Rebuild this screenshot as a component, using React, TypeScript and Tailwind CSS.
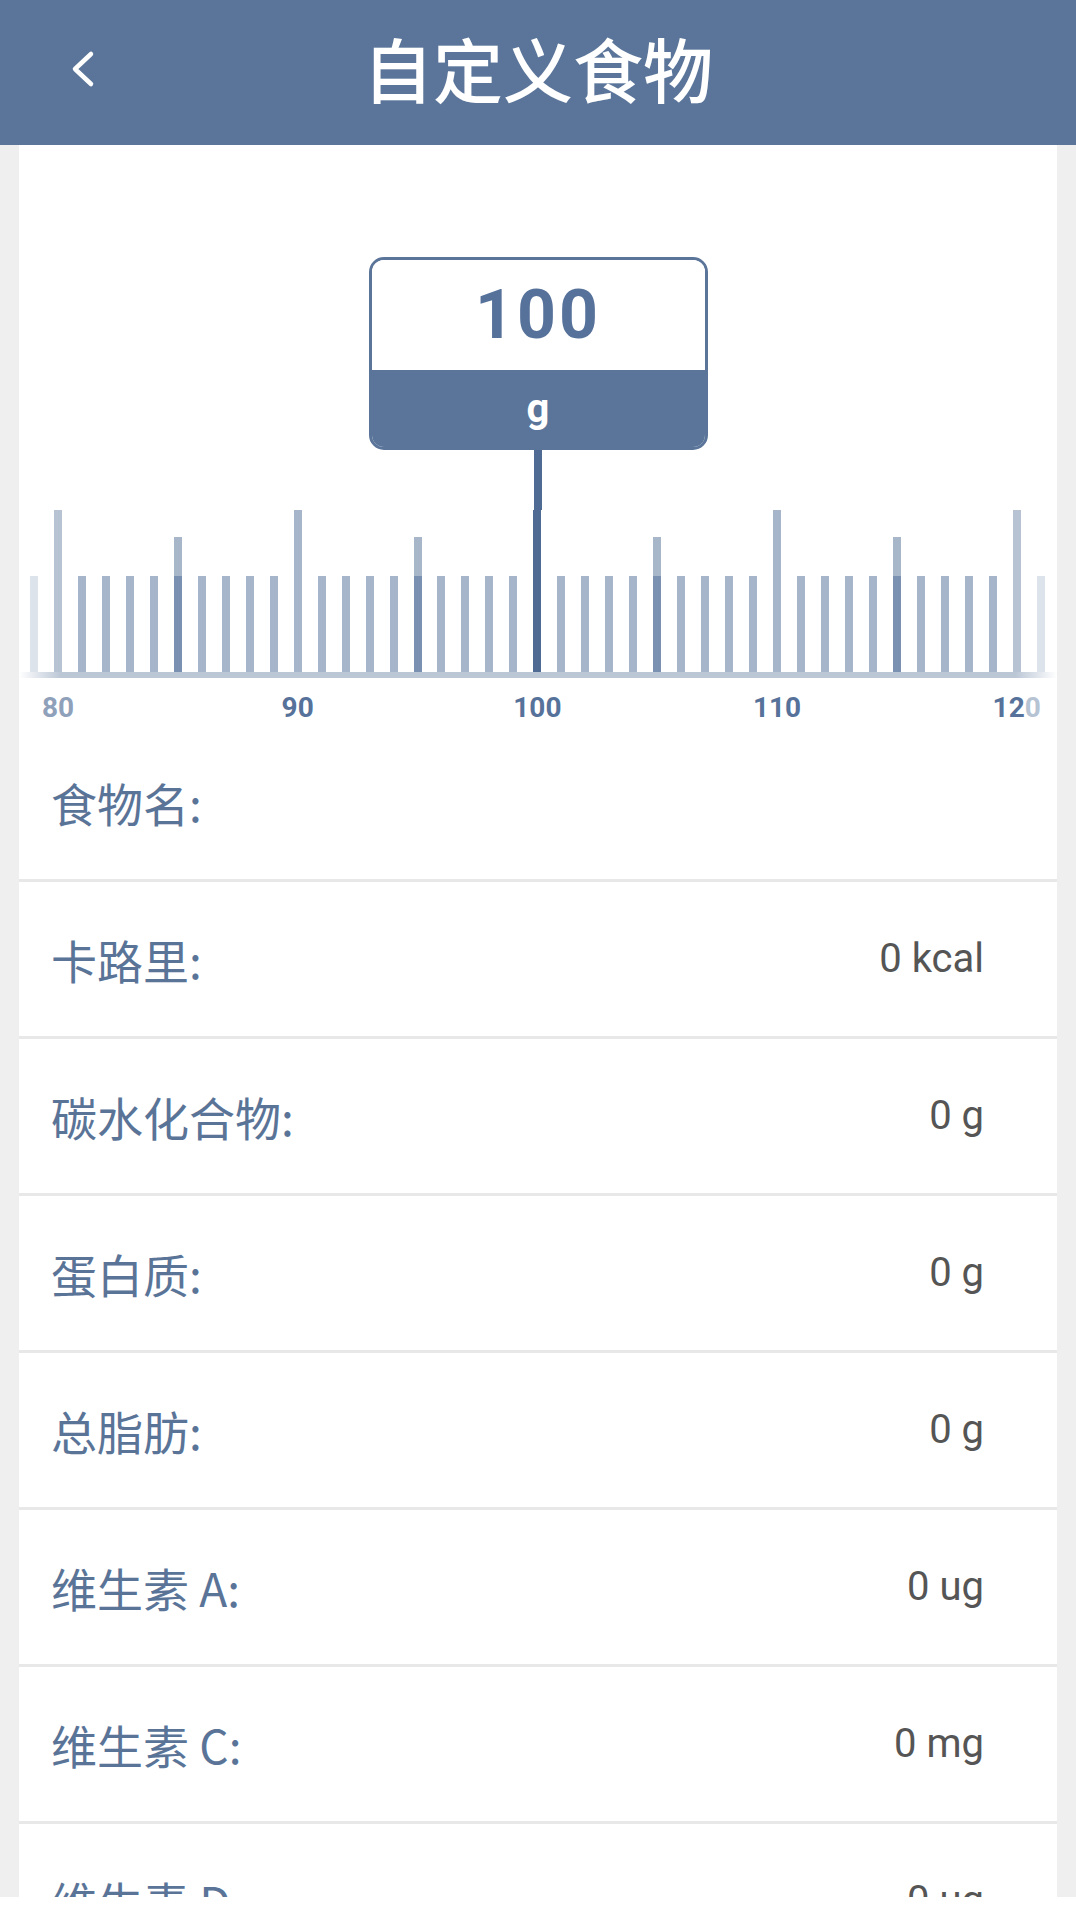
const CJK = "font-['Noto_Sans_CJK_SC','Noto_Sans',sans-serif]";

const rows = [
  { label: "食物名:", value: "" },
  { label: "卡路里:", value: "0 kcal" },
  { label: "碳水化合物:", value: "0 g" },
  { label: "蛋白质:", value: "0 g" },
  { label: "总脂肪:", value: "0 g" },
  { label: "维生素 A:", value: "0 ug" },
  { label: "维生素 C:", value: "0 mg" },
  { label: "维生素 D:", value: "0 ug" },
  { label: "维生素 E:", value: "0 mg" },
];

const ticks = Array.from({ length: 43 }, (_, i) => 79 + i);

function tickColor(v: number) {
  if (v === 79 || v === 121) return "bg-[#dde3eb]";
  if (v === 80 || v === 120) return "bg-[#b7c3d3]";
  return "bg-[#a6b5c9]";
}

function Tick({ v }: { v: number }) {
  if (v === 100) {
    return <div className="w-[8px] h-[162px] bg-[#4f6b93]" />;
  }
  if (v % 10 === 0) {
    return <div className={`w-[8px] h-[162px] ${tickColor(v)}`} />;
  }
  if (v % 5 === 0) {
    return (
      <div className="w-[8px] h-[135px] flex flex-col">
        <div className="h-[39px] bg-[#a8b6ca]" />
        <div className="flex-1 bg-[#7a91b1]" />
      </div>
    );
  }
  return <div className={`w-[8px] h-[96px] ${tickColor(v)}`} />;
}

function Label({ v }: { v: number }) {
  let content: React.ReactNode = null;
  if (v === 80) content = <span className="text-[#8fa1ba]">80</span>;
  else if (v === 90 || v === 100 || v === 110) content = <span className="text-[#56729a]">{v}</span>;
  else if (v === 120)
    content = (
      <span>
        <span className="text-[#56729a]">12</span>
        <span className="text-[#b6c3d3]">0</span>
      </span>
    );
  return (
    <div className="w-[8px] flex justify-center">
      {content && <span className="whitespace-nowrap">{content}</span>}
    </div>
  );
}

export default function App() {
  return (
    <div className="min-h-[1916px] bg-[#efefef] relative overflow-hidden">
      <header className="h-[145px] bg-[#5a7599] flex items-center">
        <div className="w-[160px] pl-[70px] flex items-center -mt-[8px]">
          <svg width="26" height="38" viewBox="0 0 26 38" fill="none">
            <path d="M21 4 L5 19 L21 34" stroke="white" strokeWidth="4.5" strokeLinecap="round" strokeLinejoin="round" />
          </svg>
        </div>
        <h1 className={`flex-1 text-center pr-[160px] -mt-[10px] text-white text-[70px] leading-none font-medium ${CJK}`}>
          自定义食物
        </h1>
      </header>

      <main className="mx-[19px] bg-white">
        <section className="pt-[112px]">
          <div className="flex flex-col items-center">
            <div className="w-[339px] h-[193px] border-[3px] border-[#5a7599] rounded-[15px] overflow-hidden flex flex-col">
              <div className="h-[110px] bg-white flex items-center justify-center">
                <span className="font-['Roboto',sans-serif] font-bold text-[68px] tracking-[3px] leading-none text-[#56729a]">100</span>
              </div>
              <div className="flex-1 bg-[#5a7599] flex items-center justify-center">
                <span className="font-['Roboto',sans-serif] font-bold text-[40px] leading-none text-white">g</span>
              </div>
            </div>
            <div className="w-[8px] h-[60px] bg-[#4f6b93]" />
          </div>

          <div className="h-[162px] flex items-end justify-between pl-[11px] pr-[12px]">
            {ticks.map((v) => (
              <Tick key={v} v={v} />
            ))}
          </div>
          <div className="h-[6px] bg-[linear-gradient(to_right,transparent,#bcc7d6_4%,#bcc7d6_96%,transparent)]" />
          <div className="h-[47px] pt-[16px] flex items-start justify-between pl-[11px] pr-[12px] font-['Roboto',sans-serif] font-bold text-[28px] leading-[28px]">
            {ticks.map((v) => (
              <Label key={v} v={v} />
            ))}
          </div>
        </section>

        <ul>
          {rows.map((r) => (
            <li
              key={r.label}
              className="h-[157px] border-b-[3px] border-[#e8e8e8] flex items-center justify-between pl-[32px] pr-[73px]"
            >
              <span className={`text-[46px] leading-none text-[#5a7498] ${CJK}`}>{r.label}</span>
              <span className="font-['Roboto',sans-serif] text-[40px] leading-none text-[#555555]">{r.value}</span>
            </li>
          ))}
        </ul>
      </main>

      <div className="fixed left-0 right-0 bottom-0 h-[19px] bg-white" />
    </div>
  );
}
